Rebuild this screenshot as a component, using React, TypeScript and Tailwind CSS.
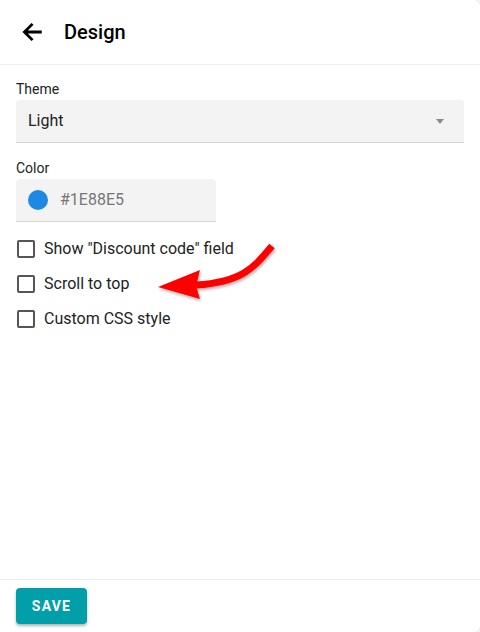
import React, { useState } from 'react';

const options = [
  { id: 'discount', label: 'Show "Discount code" field' },
  { id: 'scroll', label: 'Scroll to top' },
  { id: 'css', label: 'Custom CSS style' },
];

const App: React.FC = () => {
  const [checked, setChecked] = useState<Record<string, boolean>>({});

  return (
    <div className="w-[480px] h-[632px] bg-white overflow-hidden" style={{ fontFamily: 'Roboto, "Liberation Sans", sans-serif' }}>
      <div className="relative w-full h-full flex flex-col bg-white rounded-r-[6px] shadow-[1px_0_3px_rgba(0,0,0,0.15)]">
        {/* Header */}
        <header className="h-[65px] flex items-center border-b border-[#eeeeee] px-4">
          <button className="w-8 h-8 flex items-center justify-center text-black">
            <svg width="26" height="26" viewBox="0 0 24 24">
              <path d="M21 12H5M12.5 4.5L5 12l7.5 7.5" stroke="currentColor" strokeWidth="2.6" fill="none" />
            </svg>
          </button>
          <h1 className="ml-4 text-[20px] font-medium text-black">Design</h1>
        </header>

        {/* Main Content */}
        <main className="flex-1 px-4 pt-[15px]">
          <label className="block text-[14px] text-[#222] leading-[18px]">Theme</label>
          <div className="mt-[2px] h-[43px] bg-[#f3f3f3] rounded-t-[4px] border-b border-[#d5d5d5] flex items-center justify-between pl-3 pr-[20px]">
            <span className="text-[16px] text-[#222]">Light</span>
            <svg width="8" height="5" viewBox="0 0 10 6">
              <path d="M0 0h10L5 6z" fill="#8a8a8a" />
            </svg>
          </div>

          <label className="block mt-[16px] text-[14px] text-[#222] leading-[18px]">Color</label>
          <div className="mt-[2px] w-[200px] h-[43px] bg-[#f3f3f3] rounded-t-[4px] border-b border-[#d5d5d5] flex items-center pl-3">
            <span className="w-[20px] h-[20px] rounded-full bg-[#1e88e5]"></span>
            <span className="ml-[12px] text-[16px] text-[#777]">#1E88E5</span>
          </div>

          {/* Checkboxes */}
          <ul className="mt-[18px] flex flex-col gap-[17px]">
            {options.map((o) => (
              <li key={o.id} className="flex items-center h-[18px]">
                <button
                  onClick={() => setChecked({ ...checked, [o.id]: !checked[o.id] })}
                  className="w-[18px] h-[18px] ml-[1px] border-2 border-[#555] rounded-[2px] bg-white"
                ></button>
                <span className="ml-[9px] text-[16px] text-[#222]">{o.label}</span>
              </li>
            ))}
          </ul>
        </main>

        {/* Footer */}
        <footer className="h-[53px] border-t border-[#eeeeee] px-4 pt-[8px]">
          <button className="w-[71px] h-[36px] rounded-[4px] bg-[#009faa] text-white text-[14px] font-bold tracking-[1.2px] shadow-[0_2px_3px_rgba(0,0,0,0.3)]">
            SAVE
          </button>
        </footer>

        {/* Annotation arrow */}
        <svg className="absolute left-[150px] top-[236px] pointer-events-none" width="140" height="70" viewBox="0 0 140 70">
          <defs>
            <filter id="sh" x="-20%" y="-20%" width="140%" height="140%">
              <feDropShadow dx="1" dy="2" stdDeviation="1.5" floodColor="#000" floodOpacity="0.3" />
            </filter>
          </defs>
          <g filter="url(#sh)">
            <path d="M122 10 C105 30 94 46 46 49" stroke="#ff0000" strokeWidth="7" fill="none" strokeLinecap="butt" />
            <path d="M8 51 L50 34 L46 50 L50 63 Z" fill="#ff0000" />
          </g>
        </svg>
      </div>
    </div>
  );
};

export default App;
